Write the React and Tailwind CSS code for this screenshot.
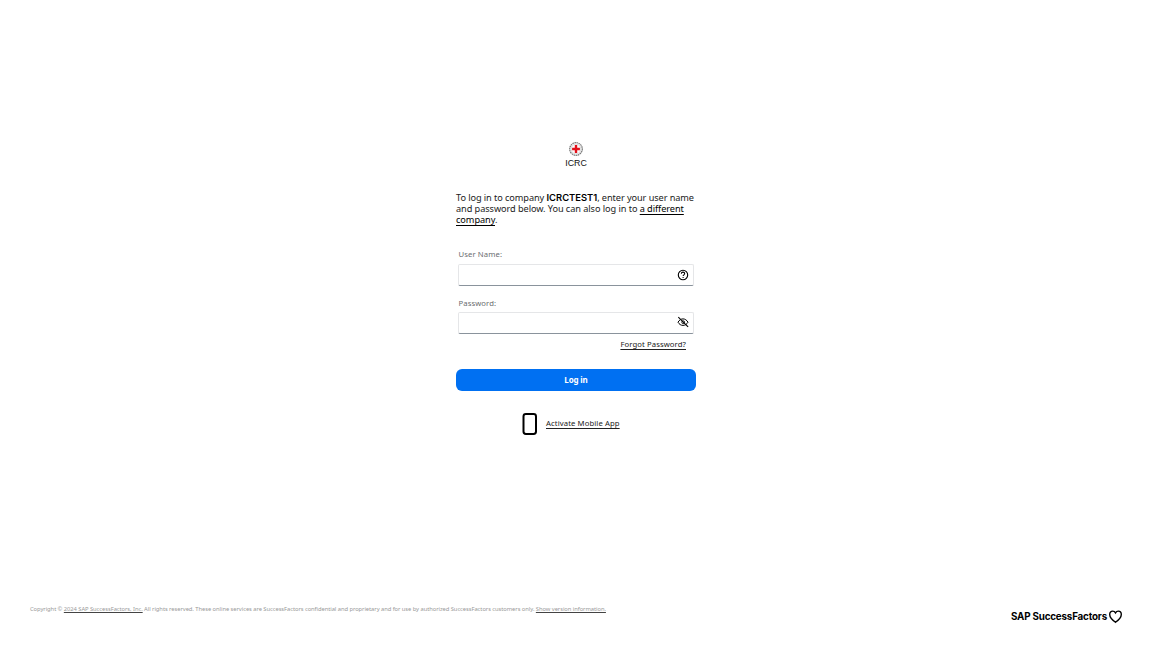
const link = 'underline decoration-1 underline-offset-[1.5px]';

function Emblem() {
  return (
    <svg viewBox="0 0 22 26" className="h-[26px] w-[22px]" role="img" aria-label="ICRC">
      <circle cx="11" cy="8" r="6.3" fill="#fff" stroke="#777" strokeWidth="1.2" strokeDasharray="1.6 .5" />
      <circle cx="11" cy="8" r="4.9" fill="none" stroke="#bbb" strokeWidth=".6" />
      <path d="M11 4.1v7.8M7.1 8h7.8" stroke="#e2101a" strokeWidth="2.4" />
      <text x="0.2" y="25" fontFamily="Liberation Sans, sans-serif" fontSize="9" textLength="21.6" lengthAdjust="spacingAndGlyphs" fill="#111">ICRC</text>
    </svg>
  );
}

function HelpIcon() {
  return (
    <svg viewBox="0 0 12 12" className="size-3" fill="none" stroke="#000">
      <circle cx="6" cy="6" r="4.7" strokeWidth="1.1" />
      <path d="M4.3 4.7c0-1 .7-1.6 1.7-1.6s1.7.6 1.7 1.5c0 1.2-1.6 1.2-1.6 2.5M6.1 8v1.1" strokeWidth="1.05" />
    </svg>
  );
}

function HiddenIcon() {
  return (
    <svg viewBox="0 0 12 12" className="-mt-[2px] size-3" fill="none" stroke="#000">
      <path d="M1 6.2C2.2 4.1 4 2.9 6 2.9s3.8 1.2 5 3.3C9.8 8.3 8 9.4 6 9.4S2.2 8.3 1 6.2z" strokeWidth="1" />
      <circle cx="6.2" cy="6.2" r="1.4" strokeWidth=".85" />
      <path d="M1.3 1.2l9.8 9.6" strokeWidth="1.1" />
    </svg>
  );
}

function Field({ label, icon, className }) {
  return (
    <div className={className}>
      <div className="h-[14px] pl-[0.5px] text-[7.7px] leading-[14px] tracking-[0.1px] text-[#6a6d70]">{label}</div>
      <div className="flex h-[22px] w-[236px] items-center justify-end rounded-[2px] border border-[#e5e6e8] border-b-[#8a939c] pr-[4px]">
        {icon}
      </div>
    </div>
  );
}

export default function App() {
  return (
    <div className="flex h-[648px] w-full flex-col overflow-hidden bg-white font-['Noto_Sans','Open_Sans',sans-serif] text-black">
      <main className="mx-auto flex h-[598px] w-[240px] flex-col pt-[141px]">
        <div className="flex justify-center"><Emblem /></div>
        <div className="mt-[25px] text-[9.2px] leading-[11px] whitespace-nowrap text-[#222]">
          <div className="tracking-[-0.08px]">To log in to company <b className="font-['Inter',sans-serif] text-[9.4px] leading-[10px] font-semibold tracking-[0px] text-black">ICRCTEST1</b>, enter your user name</div>
          <div className="tracking-[-0.07px]">and password below. You can also log in to <a className={link + ' text-black'}>a different</a></div>
          <div className="tracking-[-0.05px]"><a className={link + ' text-black'}>company</a>.</div>
        </div>
        <Field label="User Name:" icon={<HelpIcon />} className="mt-[22px] pl-[2px] [&>div:first-child]:mb-[3px]" />
        <Field label="Password:" icon={<HiddenIcon />} className="mt-[10px] pl-[2px] [&>div:first-child]:mb-[2px]" />
        <div className="mt-[4px] flex justify-end pr-[10px] text-[7.7px] leading-[12px] tracking-[0.1px] text-[#222]">
          <a className={link}>Forgot Password?</a>
        </div>
        <button className="mt-[19px] h-[22px] w-[240px] shrink-0 rounded-[6px] bg-[#0070f2] text-[8px] font-bold tracking-[-0.15px] text-white">Log in</button>
        <div className="mt-[22px] flex items-center pl-[66px]">
          <svg viewBox="0 0 16 22" className="h-[22px] w-4" fill="none" stroke="#000">
            <rect x="1.5" y="1" width="12.5" height="20" rx="2.4" strokeWidth="2" />
          </svg>
          <a className={link + ' -mt-[3px] ml-[8px] text-[7.7px] leading-[12px] tracking-[0.1px] text-[#222]'}>Activate Mobile App</a>
        </div>
      </main>
      <footer className="flex items-start justify-between pt-[5px] pr-[29px] pl-[30px]">
        <p className="text-[5.8px] leading-[12px] tracking-[-0.06px] whitespace-nowrap text-[#999]">
          Copyright © <a className="underline decoration-[#444] underline-offset-1">2024 SAP SuccessFactors, Inc.</a> All rights reserved. These online services are SuccessFactors confidential and proprietary and for use by authorized SuccessFactors customers only. <a className="underline decoration-[#444] underline-offset-1">Show version information.</a>
        </p>
        <div className="mt-[5px] flex items-center gap-[1px]">
          <span className="pt-px font-['Inter',sans-serif] text-[9.8px] leading-4 font-bold tracking-[-0.17px]">SAP SuccessFactors</span>
          <svg viewBox="0 0 15 15" className="size-[15px]" fill="none" stroke="#000" strokeWidth="1.4">
            <path d="M7.5 13.3C4 10.7 1.7 8.4 1.7 5.4c0-1.9 1.3-3.3 3-3.3 1.2 0 2.2.7 2.8 1.8.6-1.1 1.6-1.8 2.8-1.8 1.7 0 3 1.4 3 3.3 0 3-2.3 5.3-5.8 7.9z" />
          </svg>
        </div>
      </footer>
    </div>
  );
}
